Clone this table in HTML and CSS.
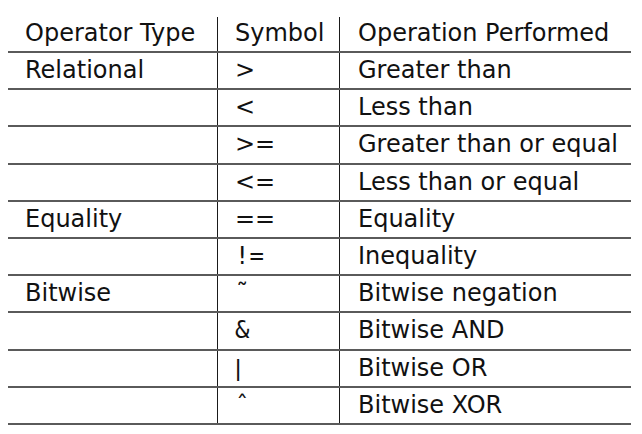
FILE: index.html
```html
<!DOCTYPE html>
<html>
<head>
<meta charset="utf-8">
<link rel="stylesheet" href="styles.css">
</head>
<body>
<table class="ops">
  <thead>
    <tr><th class="c1">Operator Type</th><th class="c2">Symbol</th><th class="c3">Operation Performed</th></tr>
  </thead>
  <tbody>
    <tr><td class="c1">Relational</td><td class="c2 sym-sans">&gt;</td><td class="c3">Greater than</td></tr>
    <tr><td class="c1"></td><td class="c2 sym-sans">&lt;</td><td class="c3">Less than</td></tr>
    <tr><td class="c1"></td><td class="c2 sym-sans">&gt;=</td><td class="c3">Greater than or equal</td></tr>
    <tr><td class="c1"></td><td class="c2 sym-sans">&lt;=</td><td class="c3">Less than or equal</td></tr>
    <tr><td class="c1">Equality</td><td class="c2 sym-sans">==</td><td class="c3">Equality</td></tr>
    <tr><td class="c1"></td><td class="c2 sym-mono">!=</td><td class="c3">Inequality</td></tr>
    <tr><td class="c1">Bitwise</td><td class="c2 sym-mono">&#732;</td><td class="c3">Bitwise negation</td></tr>
    <tr><td class="c1"></td><td class="c2 sym-mono">&amp;</td><td class="c3">Bitwise AND</td></tr>
    <tr><td class="c1"></td><td class="c2 sym-bar">|</td><td class="c3">Bitwise OR</td></tr>
    <tr><td class="c1"></td><td class="c2 sym-mono">&#710;</td><td class="c3">Bitwise XOR</td></tr>
  </tbody>
</table>
</body>
</html>
```

FILE: styles.css
```css
html, body {
  margin: 0;
  padding: 0;
  background: #ffffff;
}
body {
  padding: 17px 0 0 8px;
  font-family: "DejaVu Sans", sans-serif;
  color: #111;
}
.ops {
  border-collapse: collapse;
  table-layout: fixed;
  width: 623px;
}
.ops th, .ops td {
  font-weight: normal;
  font-size: 24px;
  text-align: left;
  padding: 0 0 0 17px;
  line-height: 24px;
  white-space: nowrap;
  vertical-align: top;
}
.ops th {
  height: 30px;
  padding-top: 4px;
  border-bottom: 2px solid #5a5a5a;
}
.ops td {
  height: 30.2px;
  padding-top: 5px;
  border-bottom: 2px solid #5a5a5a;
}
.c1 { width: 192px; border-right: 1px solid #1a1a1a; }
.c2 { width: 104px; border-right: 1px solid #1a1a1a; }
.c3 { width: auto; padding-left: 18px !important; }
.sym-sans { font-family: "DejaVu Sans", sans-serif; }
.sym-mono { font-family: "DejaVu Sans Mono", monospace; }
.sym-bar { font-family: "Liberation Sans", sans-serif; }
```
